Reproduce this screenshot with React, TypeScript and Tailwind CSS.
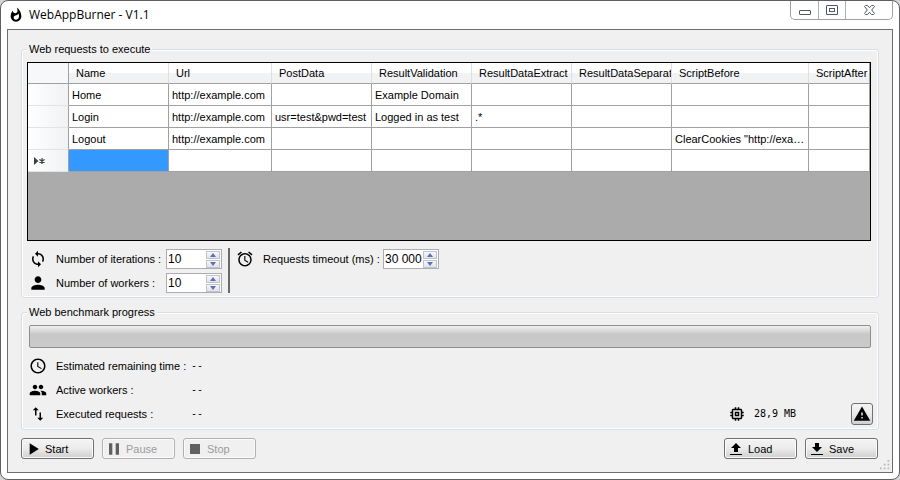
import type { ComponentProps, ReactNode } from "react";
import {
  MdAccessTime,
  MdAlarm,
  MdLoop,
  MdMemory,
  MdPause,
  MdPeople,
  MdPerson,
  MdPlayArrow,
  MdStop,
  MdWarning,
  MdWhatshot,
} from "react-icons/md";

type Column = { name: string; width: string };

const COLUMNS: Column[] = [
  { name: "Name", width: "w-[100px]" },
  { name: "Url", width: "w-[103px]" },
  { name: "PostData", width: "w-[100px]" },
  { name: "ResultValidation", width: "w-[100px]" },
  { name: "ResultDataExtract", width: "w-[100px]" },
  { name: "ResultDataSeparator", width: "w-[100px]" },
  { name: "ScriptBefore", width: "w-[137px]" },
  { name: "ScriptAfter", width: "" },
];

const REQUESTS = [
  ["Home", "http://example.com", "", "Example Domain", "", "", "", ""],
  ["Login", "http://example.com", "usr=test&pwd=test", "Logged in as test", ".*", "", "", ""],
  ["Logout", "http://example.com", "", "", "", "", 'ClearCookies "http://example.com"', ""],
];

const BUTTON_GRADIENT = "bg-gradient-to-b from-[#f4f4f4] via-[#ebebeb] to-[#cfcfcf]";

function TitleBar() {
  return (
    <header className="flex h-7 items-start justify-between pl-px">
      <div className="flex h-7 items-center gap-[5px]">
        <MdWhatshot className="size-4" aria-hidden />
        <h1 className="font-['Open_Sans',sans-serif] text-xs leading-4">WebAppBurner - V1.1</h1>
      </div>
      <div className="flex h-[19px] rounded-b-[5px] border border-t-0 border-[#a0a0a0]">
        <button type="button" aria-label="Minimize" className="flex w-7 items-center justify-center border-r border-[#b0b0b0]">
          <svg viewBox="0 0 12 5" className="mt-1 h-[5px] w-3" aria-hidden>
            <rect x=".5" y=".5" width="11" height="4" rx=".5" fill="#fff" stroke="#535666" />
          </svg>
        </button>
        <button type="button" aria-label="Maximize" className="flex w-[27px] items-center justify-center border-r border-[#b0b0b0]">
          <svg viewBox="0 0 12 10" className="h-2.5 w-3" fill="#fff" stroke="#535666" aria-hidden>
            <rect x=".5" y=".5" width="11" height="9" rx=".5" />
            <rect x="3.5" y="3.5" width="5" height="3" />
          </svg>
        </button>
        <button type="button" aria-label="Close" className="flex w-[46px] items-center justify-center">
          <svg viewBox="0 0 11 10" className="h-2.5 w-[11px]" aria-hidden>
            <path
              d="M.5 1.500 1.500.5h2l2 2.200 2-2.200h2l1 1L7.700 5l2.800 3.500-1 1h-2l-2-2.200-2 2.200h-2l-1-1L3.300 5z"
              fill="#fff"
              stroke="#535666"
            />
          </svg>
        </button>
      </div>
    </header>
  );
}

function GroupBox({ title, children }: { title: string; children: ReactNode }) {
  return (
    <fieldset className="min-w-0 rounded-[3px] border border-[#d5dfe5] px-[5px] shadow-[inset_0_0_0_1px_#fff]">
      <legend className="bg-[#f0f0f0] px-0.5 leading-[14px]">{title}</legend>
      {children}
    </fieldset>
  );
}

function RequestGrid() {
  return (
    <div className="h-[179px] overflow-hidden border border-black bg-[#ababab]">
      <table className="w-full table-fixed border-separate border-spacing-0 text-left">
        <thead>
          <tr className="h-[21px]">
            <th className="w-[41px] border-r border-b border-[#a0a0a0] bg-[#f7f8fa]" aria-label="Row" />
            {COLUMNS.map((column) => (
              <th
                key={column.name}
                className={`${column.width} overflow-hidden border-r border-b border-r-[#dedfe1] border-b-[#a0a0a0] bg-gradient-to-b from-white from-50% to-[#f1f2f4] to-50% p-0 pl-[7px] font-normal whitespace-nowrap last:border-r-[#a0a0a0]`}
              >
                {column.name}
              </th>
            ))}
          </tr>
        </thead>
        <tbody>
          {REQUESTS.map((cells) => (
            <tr key={cells[0]} className="h-[22px]">
              <th className="border-r border-b border-r-[#a0a0a0] border-b-[#e2e3e5] bg-gradient-to-r from-white via-[#f7f8fa] to-[#f1f2f4]" aria-label={cells[0]} />
              {cells.map((cell, i) => (
                <td key={i} className="truncate border-r border-b border-[#a0a0a0] bg-white p-0 pl-[3px]">
                  {cell}
                </td>
              ))}
            </tr>
          ))}
          <tr className="h-[22px]">
            <th className="border-r border-b border-r-[#a0a0a0] border-b-[#e2e3e5] bg-gradient-to-r from-white via-[#f7f8fa] to-[#f1f2f4] p-0 pl-1.5" aria-label="New row">
              <svg viewBox="0 0 11 8" className="h-2 w-[11px]" aria-hidden>
                <path d="M0 0v8l4.500-4z" fill="#404040" />
                <path d="M8 1v6M5.400 2.500l5.200 3M10.600 2.500l-5.200 3" stroke="#404040" strokeWidth="1.2" />
              </svg>
            </th>
            {COLUMNS.map((column) => (
              <td key={column.name} className="border-r border-b border-[#a0a0a0] bg-white p-0 first-of-type:bg-[#3399ff]" />
            ))}
          </tr>
        </tbody>
      </table>
    </div>
  );
}

function RowIcon({ children }: { children: ReactNode }) {
  return (
    <span className="mr-2 flex w-5 justify-center" aria-hidden>
      {children}
    </span>
  );
}

function SpinButton({ label, down }: { label: string; down?: boolean }) {
  return (
    <button
      type="button"
      aria-label={label}
      className="flex h-2 w-3.5 items-center justify-center border border-[#c0c3ca] bg-gradient-to-b from-[#f8f8f8] to-[#e2e3e8]"
    >
      <svg viewBox="0 0 6 4" className="h-1 w-1.5 fill-[#5b70bd]" aria-hidden>
        <path d={down ? "M0 0h6L3 4z" : "M0 4h6L3 0z"} />
      </svg>
    </button>
  );
}

type NumberFieldProps = { id: string; label: string; value: string; icon: ReactNode; labelWidth: string };

function NumberField({ id, label, value, icon, labelWidth }: NumberFieldProps) {
  return (
    <div className="flex h-6 items-center">
      <RowIcon>{icon}</RowIcon>
      <label htmlFor={id} className={`${labelWidth} whitespace-nowrap`}>{label}</label>
      <div className="flex h-5 w-14 items-center border border-[#abadb3] bg-white pr-px">
        <input id={id} type="text" defaultValue={value} className="h-4 w-0 min-w-0 flex-1 pl-px text-xs outline-none" />
        <div className="flex flex-col gap-px">
          <SpinButton label={`Increase ${label}`} />
          <SpinButton label={`Decrease ${label}`} down />
        </div>
      </div>
    </div>
  );
}

function StatusRow({ icon, label, children }: { icon: ReactNode; label: string; children?: ReactNode }) {
  return (
    <div className="flex h-6 items-center">
      <RowIcon>{icon}</RowIcon>
      <span className="w-[135px]">{label}</span>
      <span className="font-['DejaVu_Sans_Mono',monospace] text-[10px]">--</span>
      {children}
    </div>
  );
}

function ToolButton({ icon, children, ...props }: ComponentProps<"button"> & { icon: ReactNode }) {
  return (
    <button
      type="button"
      className={`flex h-[21px] w-[73px] items-center gap-0.5 rounded-[3px] border border-[#707070] pl-px shadow-[inset_0_0_0_1px_#fbfbfb] disabled:border-[#adb2b5] disabled:bg-none disabled:text-[#9b9b9b] ${BUTTON_GRADIENT}`}
      {...props}
    >
      <span className="flex w-5 justify-center" aria-hidden>{icon}</span>
      {children}
    </button>
  );
}

export default function App() {
  return (
    <div className="min-h-screen bg-[#d4d4d4] font-['Liberation_Sans',Arial,sans-serif] text-[11px] leading-[14px] text-black">
      <div className="flex min-h-screen flex-col rounded-lg border border-[#5f6062] bg-white px-1.5 pb-1.5">
        <TitleBar />
        <main className="relative flex-1 border border-[#6d6d6d] bg-[#f0f0f0] px-[13px] pt-3 pb-2">
          <GroupBox title="Web requests to execute">
            <div className="pt-1.5 pr-0.5">
              <RequestGrid />
            </div>
            <div className="flex items-start pt-1.5 pb-0.5 pl-px">
              <div>
                <NumberField id="iterations" label="Number of iterations :" value="10" labelWidth="w-[110px]" icon={<MdLoop className="size-[18px]" />} />
                <NumberField id="workers" label="Number of workers :" value="10" labelWidth="w-[110px]" icon={<MdPerson className="size-5" />} />
              </div>
              <div className="mt-px mr-[5px] ml-1.5 h-[45px] w-0.5 bg-[#696969]" />
              <NumberField id="timeout" label="Requests timeout (ms) :" value="30 000" labelWidth="w-[120px]" icon={<MdAlarm className="size-[18px]" />} />
            </div>
          </GroupBox>

          <div className="pt-[7px]">
            <GroupBox title="Web benchmark progress">
              <div className="px-0.5 pt-1.5">
                <div
                  role="progressbar"
                  aria-label="Web benchmark progress"
                  aria-valuenow={0}
                  className="h-[23px] rounded-[2px] border border-[#8e8e8e] bg-gradient-to-b from-[#f0f0f0] via-[#c8c8c8] via-40% to-[#cacaca]"
                />
              </div>
              <div className="pt-1.5 pb-[3px] pl-px">
                <StatusRow icon={<MdAccessTime className="size-[18px]" />} label="Estimated remaining time :" />
                <StatusRow icon={<MdPeople className="size-[18px]" />} label="Active workers :" />
                <StatusRow
                  icon={
                    <svg viewBox="0 0 24 24" className="size-[18px]">
                      <path d="M16 17V10h-2v7h-3l4 4 4-4zM9 3 5 7h3v7h2V7h3z" />
                    </svg>
                  }
                  label="Executed requests :"
                >
                  <MdMemory className="ml-auto size-[18px]" aria-hidden />
                  <span className="w-[105px] pl-2 font-['DejaVu_Sans_Mono',monospace] text-[10px]">28,9 MB</span>
                  <button type="button" aria-label="Warnings" className={`flex size-[22px] items-center justify-center rounded-[3px] border border-[#707070] ${BUTTON_GRADIENT}`}>
                    <MdWarning className="size-[18px]" />
                  </button>
                </StatusRow>
              </div>
            </GroupBox>
          </div>

          <div className="flex items-center gap-2 pt-2">
            <ToolButton icon={<MdPlayArrow className="size-5" />}>Start</ToolButton>
            <ToolButton icon={<MdPause className="size-5 text-[#606060]" />} disabled>Pause</ToolButton>
            <ToolButton icon={<MdStop className="size-5 text-[#606060]" />} disabled>Stop</ToolButton>
            <div className="ml-auto flex gap-2 pr-px">
              <ToolButton
                icon={<svg viewBox="0 0 12 12" className="size-3"><path d="M4 9V5H1l5-5 5 5H8v4zM0 11h12v1H0z" /></svg>}
              >
                Load
              </ToolButton>
              <ToolButton
                icon={<svg viewBox="0 0 12 12" className="size-3"><path d="M4 0h4v4h3L6 9 1 4h3zM0 11h12v1H0z" /></svg>}
              >
                Save
              </ToolButton>
            </div>
          </div>

          <svg viewBox="0 0 12 12" className="absolute right-0.5 bottom-0.5 size-2.5 fill-[#b8b8b8]" aria-hidden>
            <path d="M9 0h2v2H9zM9 4.500h2v2H9zM9 9h2v2H9zM4.500 4.500h2v2h-2zM4.500 9h2v2h-2zM0 9h2v2H0z" />
          </svg>
        </main>
      </div>
    </div>
  );
}
